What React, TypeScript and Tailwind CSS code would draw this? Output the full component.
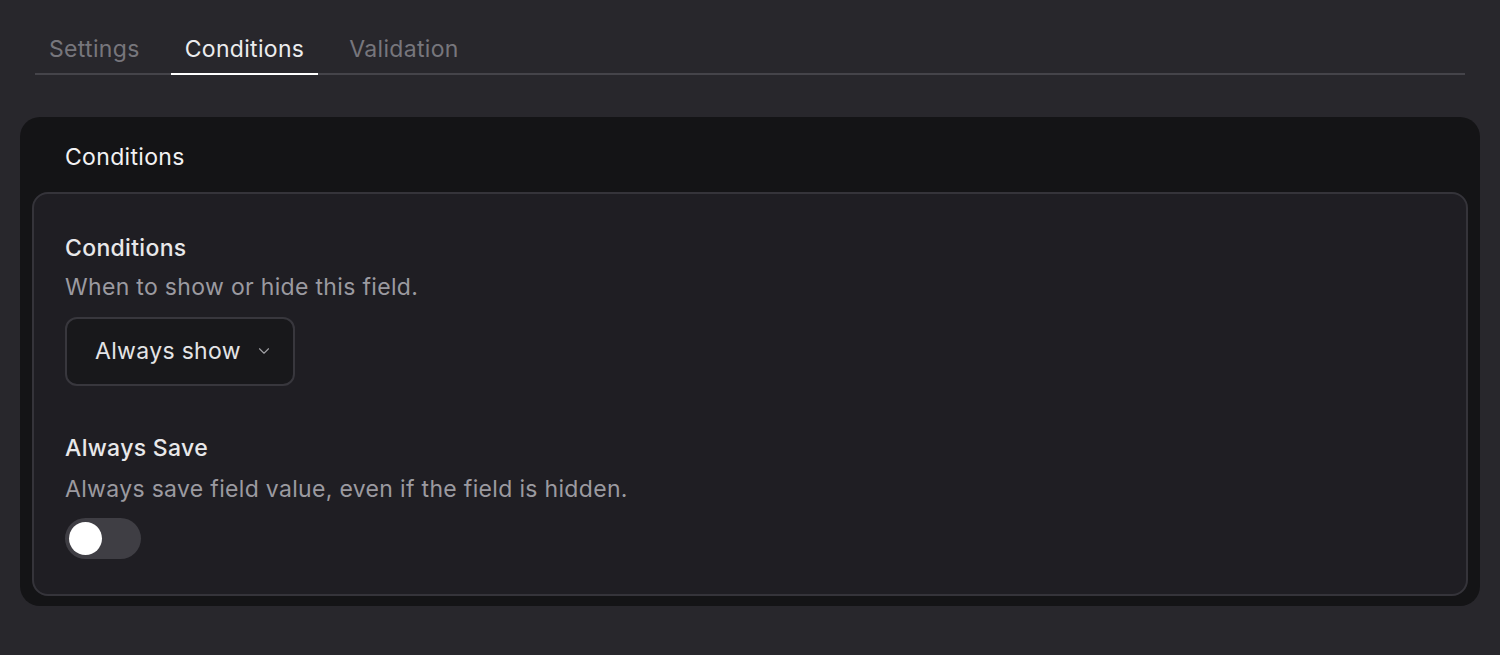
import { useState } from "react";
import { ChevronDown } from "lucide-react";

const tabs = ["Settings", "Conditions", "Validation"];

export default function App() {
  const [active, setActive] = useState("Conditions");
  const [alwaysSave, setAlwaysSave] = useState(false);

  return (
    <div className="min-h-[655px] w-full bg-[#28272c] px-5 pt-[30px] font-['Inter',sans-serif] text-[23px] tracking-[0.014em]">
      <div className="mx-[15px] flex gap-[17px] border-b-2 border-[#45444a]">
        {tabs.map((t) => (
          <button
            key={t}
            onClick={() => setActive(t)}
            className={
              t === active
                ? "-mb-[2px] border-b-2 border-white px-[14px] pt-[2px] pb-[6px] text-[#ececee]"
                : "-mb-[2px] border-b-2 border-transparent px-[14px] pt-[2px] pb-[6px] text-[#77767c]"
            }
          >
            {t}
          </button>
        ))}
      </div>

      <div className="mt-[42px] rounded-[20px] bg-[#141416] px-3 pb-[10px]">
        <div className="px-[33px] pt-[26px] pb-[21px] leading-[28px] text-[#f2f2f3]">Conditions</div>
        <div className="rounded-[16px] border-2 border-[#35343a] bg-[#1f1e23] px-[31px] pt-[40px] pb-[35px]">
          <div className="leading-[28px] font-medium text-[#e8e8ea]">Conditions</div>
          <div className="mt-[11px] leading-[28px] text-[#9b9aa0]">When to show or hide this field.</div>
          <button className="mt-[16px] flex h-[69px] items-center gap-[14px] rounded-[12px] border-2 border-[#38373d] bg-[#18181b] pr-[20px] pl-[28px] text-[#e4e4e6]">
            <span>Always show</span>
            <ChevronDown className="h-[18px] w-[18px] text-[#a0a0a5]" strokeWidth={1.5} />
          </button>

          <div className="mt-[48px] leading-[28px] font-medium text-[#e8e8ea]">Always Save</div>
          <div className="mt-[13px] leading-[28px] text-[#9b9aa0]">Always save field value, even if the field is hidden.</div>
          <button
            onClick={() => setAlwaysSave((v) => !v)}
            aria-label="Always save"
            className={
              alwaysSave
                ? "mt-[15px] flex h-[41px] w-[76px] items-center justify-end rounded-full bg-[#e5e5e7] px-[4px]"
                : "mt-[15px] flex h-[41px] w-[76px] items-center rounded-full bg-[#3f3e44] px-[4px]"
            }
          >
            <span className={alwaysSave ? "h-[33px] w-[33px] rounded-full bg-[#1f1e23]" : "h-[33px] w-[33px] rounded-full bg-white"} />
          </button>
        </div>
      </div>
    </div>
  );
}
